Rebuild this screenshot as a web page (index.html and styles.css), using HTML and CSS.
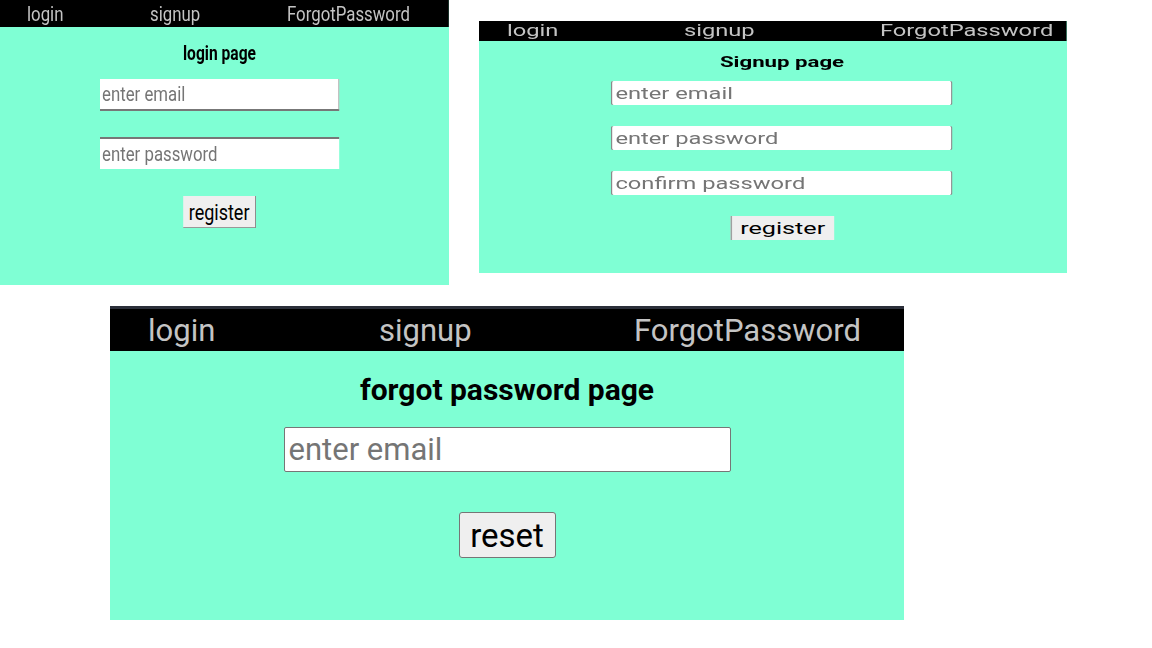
FILE: index.html
```html
<!DOCTYPE html>
<html lang="en">
<head>
<meta charset="utf-8">
<title>Auth pages</title>
<link rel="stylesheet" href="styles.css">
</head>
<body>
<div class="canvas">
  <div class="row row-top">
    <section class="shot shot-login">
      <div class="screen">
        <nav class="nav">
          <a class="nav-link" href="#">login</a>
          <a class="nav-link" href="#">signup</a>
          <a class="nav-link" href="#">ForgotPassword</a>
        </nav>
        <form class="form">
          <h2 class="title">login page</h2>
          <input class="field field-a" type="email" placeholder="enter email">
          <input class="field field-b" type="password" placeholder="enter password">
          <button class="btn" type="button">register</button>
        </form>
      </div>
    </section>

    <section class="shot shot-signup">
      <div class="screen">
        <nav class="nav">
          <a class="nav-link" href="#">login</a>
          <a class="nav-link" href="#">signup</a>
          <a class="nav-link" href="#">ForgotPassword</a>
        </nav>
        <form class="form">
          <h2 class="title">Signup page</h2>
          <input class="field" type="email" placeholder="enter email">
          <input class="field" type="password" placeholder="enter password">
          <input class="field" type="password" placeholder="confirm password">
          <button class="btn" type="button">register</button>
        </form>
      </div>
    </section>
  </div>

  <div class="row row-bottom">
    <section class="shot shot-forgot">
      <div class="screen">
        <nav class="nav">
          <a class="nav-link" href="#">login</a>
          <a class="nav-link" href="#">signup</a>
          <a class="nav-link" href="#">ForgotPassword</a>
        </nav>
        <form class="form">
          <h2 class="title">forgot password page</h2>
          <input class="field" type="email" placeholder="enter email">
          <button class="btn" type="button">reset</button>
        </form>
      </div>
    </section>
  </div>
</div>
</body>
</html>
```

FILE: styles.css
```css
* { box-sizing: border-box; }

html, body {
  margin: 0;
  padding: 0;
  background: #ffffff;
}

body {
  font-family: Roboto, "DejaVu Sans", sans-serif;
  width: 1152px;
  height: 648px;
  overflow: hidden;
}

.canvas {
  display: flex;
  flex-direction: column;
}

.row {
  display: flex;
  align-items: flex-start;
}

.shot {
  overflow: hidden;
  background: #7fffd4;
  flex: none;
}

.screen {
  transform-origin: 0 0;
  display: flex;
  flex-direction: column;
}

.nav {
  background: #000;
  display: grid;
  align-items: center;
}

.nav-link {
  color: #c4c4c4;
  text-decoration: none;
  white-space: nowrap;
}

.form {
  display: flex;
  flex-direction: column;
  align-items: center;
  margin: 0;
}

.title {
  margin: 0;
  font-weight: 700;
  color: #000;
  white-space: nowrap;
}

.field {
  display: block;
  background: #fff;
  font-family: inherit;
  color: #000;
  margin: 0;
  outline: none;
}

.field::placeholder {
  color: #757575;
  opacity: 1;
}

.btn {
  display: block;
  font-family: inherit;
  color: #000;
  background: #efefef;
  margin: 0;
  padding: 0;
  cursor: pointer;
}

/* ---------- login panel ---------- */
.shot-login {
  width: 449px;
  height: 285px;
}

.shot-login .screen {
  width: 561.25px;
  height: 285px;
  transform: scaleX(0.8);
}

.shot-login .nav {
  height: 27px;
  padding-left: 33.75px;
  grid-template-columns: 153.75px 171.25px 1fr;
  font-size: 21px;
}

.shot-login .form {
  padding: 17px 12.5px 0 0;
}

.shot-login .title {
  font-size: 19.5px;
  line-height: 20px;
  margin-bottom: 15px;
}

.shot-login .field {
  width: 298.75px;
  height: 32px;
  font-size: 21px;
  padding: 0 0 0 2.5px;
  border: 0;
  border-radius: 0;
}

.shot-login .field-a {
  border-bottom: 2px solid #777;
  border-right: 1px solid #999;
  margin-bottom: 26px;
}

.shot-login .field-b {
  border-top: 2px solid #777;
  margin-bottom: 27px;
}

.shot-login .btn {
  width: 91.25px;
  height: 32px;
  font-size: 22.5px;
  border: 0;
  border-right: 1px solid #767676;
  border-bottom: 1px solid #999;
  border-radius: 0;
}

/* ---------- signup panel ---------- */
.shot-signup {
  width: 588px;
  height: 252px;
  margin: 21px 0 0 30px;
}

.shot-signup .screen {
  width: 397.3px;
  height: 252px;
  transform: scaleX(1.48);
}

.shot-signup .nav {
  height: 20px;
  padding-left: 18.92px;
  grid-template-columns: 119.59px 132.44px 1fr;
  font-size: 16px;
  line-height: 18px;
}

.shot-signup .form {
  padding: 13px 0 0 12.16px;
  gap: 21px;
}

.shot-signup .title {
  font-size: 15px;
  line-height: 16px;
  margin-bottom: -10px;
}

.shot-signup .field {
  width: 231.1px;
  height: 24px;
  font-size: 16px;
  padding: 0 0 0 2px;
  border: 0;
  border-left: 1px solid #8a8a8a;
  border-right: 1px solid #8a8a8a;
  border-radius: 2px;
}

.shot-signup .btn {
  width: 69.6px;
  height: 24px;
  font-size: 17px;
  border: 0;
  border-left: 1px solid #a0a0a0;
  border-radius: 0;
}

/* ---------- forgot panel ---------- */
.shot-forgot {
  width: 794px;
  height: 314px;
  margin: 21px 0 0 110px;
}

.shot-forgot .screen {
  width: 794px;
  height: 314px;
}

.shot-forgot .nav {
  height: 45px;
  border-top: 3px solid #2b2f3a;
  padding-left: 38px;
  grid-template-columns: 231px 255px 1fr;
  font-size: 31px;
}

.shot-forgot .form {
  padding-top: 21px;
}

.shot-forgot .title {
  font-size: 30px;
  line-height: 36px;
  margin-bottom: 19px;
}

.shot-forgot .field {
  width: 447px;
  height: 45px;
  font-size: 31px;
  padding: 0 0 0 4px;
  border: 1px solid #767676;
  border-radius: 2px;
  margin-bottom: 40px;
}

.shot-forgot .btn {
  width: 97px;
  height: 46px;
  font-size: 33px;
  border: 1px solid #767676;
  border-radius: 3px;
}
```
